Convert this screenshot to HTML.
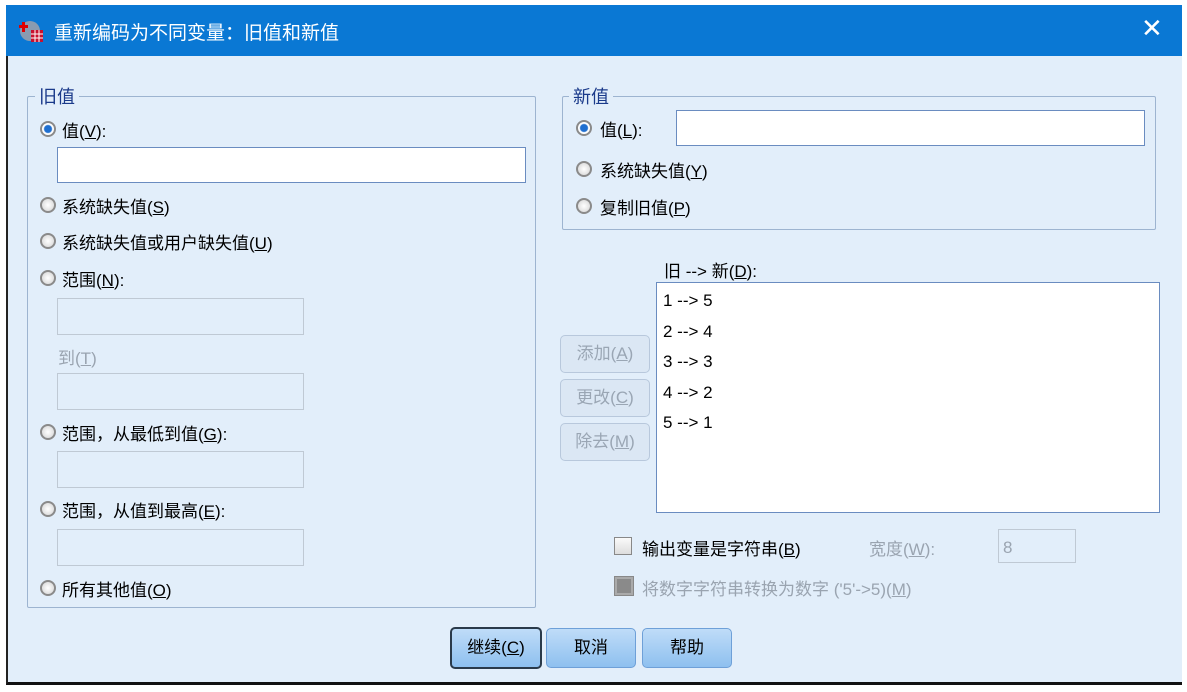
<!DOCTYPE html><html><head><meta charset="utf-8"><style>
body{margin:0;width:1187px;height:692px;background:#fff;font-family:"Liberation Sans","Noto Sans CJK SC",sans-serif;font-size:17px;color:#000;position:relative;overflow:hidden}
.a{position:absolute}
.win{left:6px;top:5px;width:1174px;height:677px;background:#e2eefa;border-left:2px solid #222;border-bottom:3px solid #111}
.title{left:6px;top:5px;width:1176px;height:51px;background:#0a78d4;color:#fff;font-size:19px}
.grp{border:1px solid #9db4d0;border-radius:2px}
.lg{background:#e2eefa;padding:0 4px;color:#1a3a8a;font-size:18px}
.rad{width:16px;height:16px;border-radius:50%;border:2px solid #8a8a8a;background:radial-gradient(circle,#fff 0,#e0e0e0 70%);box-sizing:border-box}
.rad.on{background:radial-gradient(circle,#1f6fd0 0 3.5px,#fff 4.5px)}
.inp{background:#fff;border:1px solid #6a8cc0}
.dis{background:#e2eefa;border:1px solid #bfc9d4}
.btn{border:1px solid #6ea0d8;border-radius:5px;background:linear-gradient(#bfdcf8,#8ec0ef);text-align:center;line-height:38px;font-size:17px}
.dbtn{border:1px solid #b8c8dc;border-radius:5px;background:#dbe7f4;color:#9aa6b4;text-align:center;line-height:36px}
u{text-decoration:underline}
.g{color:#9aa4b0}
</style></head><body>
<div class="a win"></div>
<div class="a title">
<svg class="a" style="left:13px;top:13px" width="26" height="26"><circle cx="11" cy="13" r="10" fill="#8a9bb0"/><rect x="3" y="4" width="3" height="10" fill="#d00"/><rect x="0" y="7" width="9" height="3" fill="#d00"/><rect x="12" y="12" width="12" height="12" fill="#c8102e"/><path d="M12 16h12M12 20h12M16 12v12M20 12v12" stroke="#fff" stroke-width="1"/></svg>
<div class="a" style="left:48px;top:13px">重新编码为不同变量：旧值和新值</div>
<div class="a" style="left:1135px;top:8px;font-size:26px;font-weight:300">✕</div>
</div>

<div class="a grp" style="left:27px;top:96px;width:507px;height:510px"></div>
<div class="a lg" style="left:35px;top:83px">旧值</div>
<div class="a rad on" style="left:40px;top:121px"></div><div class="a" style="left:62px;top:117px">值(<u>V</u>):</div>
<div class="a inp" style="left:57px;top:147px;width:467px;height:34px"></div>
<div class="a rad" style="left:40px;top:197px"></div><div class="a" style="left:62px;top:193px">系统缺失值(<u>S</u>)</div>
<div class="a rad" style="left:40px;top:233px"></div><div class="a" style="left:62px;top:229px">系统缺失值或用户缺失值(<u>U</u>)</div>
<div class="a rad" style="left:40px;top:270px"></div><div class="a" style="left:62px;top:266px">范围(<u>N</u>):</div>
<div class="a dis" style="left:57px;top:298px;width:245px;height:35px"></div>
<div class="a g" style="left:58px;top:344px">到(<u>T</u>)</div>
<div class="a dis" style="left:57px;top:373px;width:245px;height:35px"></div>
<div class="a rad" style="left:40px;top:424px"></div><div class="a" style="left:62px;top:420px">范围，从最低到值(<u>G</u>):</div>
<div class="a dis" style="left:57px;top:451px;width:245px;height:35px"></div>
<div class="a rad" style="left:40px;top:501px"></div><div class="a" style="left:62px;top:497px">范围，从值到最高(<u>E</u>):</div>
<div class="a dis" style="left:57px;top:529px;width:245px;height:35px"></div>
<div class="a rad" style="left:40px;top:580px"></div><div class="a" style="left:62px;top:576px">所有其他值(<u>O</u>)</div>

<div class="a grp" style="left:562px;top:96px;width:592px;height:132px"></div>
<div class="a lg" style="left:569px;top:83px">新值</div>
<div class="a rad on" style="left:576px;top:120px"></div><div class="a" style="left:600px;top:116px">值(<u>L</u>):</div>
<div class="a inp" style="left:676px;top:110px;width:467px;height:34px"></div>
<div class="a rad" style="left:576px;top:161px"></div><div class="a" style="left:600px;top:157px">系统缺失值(<u>Y</u>)</div>
<div class="a rad" style="left:576px;top:198px"></div><div class="a" style="left:600px;top:194px">复制旧值(<u>P</u>)</div>

<div class="a" style="left:664px;top:257px">旧 --&gt; 新(<u>D</u>):</div>
<div class="a inp" style="left:656px;top:282px;width:502px;height:229px"></div>
<div class="a" style="left:663px;top:286px;line-height:30.5px">1 --&gt; 5<br>2 --&gt; 4<br>3 --&gt; 3<br>4 --&gt; 2<br>5 --&gt; 1</div>
<div class="a dbtn" style="left:560px;top:335px;width:88px;height:36px">添加(<u>A</u>)</div>
<div class="a dbtn" style="left:560px;top:379px;width:88px;height:36px">更改(<u>C</u>)</div>
<div class="a dbtn" style="left:560px;top:423px;width:88px;height:36px">除去(<u>M</u>)</div>

<div class="a" style="left:614px;top:537px;width:18px;height:18px;border:1px solid #888;background:linear-gradient(#fafafa,#ddd);box-sizing:border-box"></div>
<div class="a" style="left:642px;top:535px">输出变量是字符串(<u>B</u>)</div>
<div class="a g" style="left:869px;top:535px">宽度(<u>W</u>):</div>
<div class="a dis g" style="left:998px;top:529px;width:78px;height:34px;line-height:36px;padding-left:4px;box-sizing:border-box">8</div>
<div class="a" style="left:614px;top:576px;width:20px;height:20px;border:1px solid #888;background:#8a8a8a;box-sizing:border-box;box-shadow:inset 0 0 0 2px #aaa"></div>
<div class="a g" style="left:642px;top:575px">将数字字符串转换为数字 ('5'-&gt;5)(<u>M</u>)</div>

<div class="a btn" style="left:450px;top:627px;width:88px;height:38px;border:2px solid #2a3a4a">继续(<u>C</u>)</div>
<div class="a btn" style="left:546px;top:628px;width:88px;height:38px">取消</div>
<div class="a btn" style="left:642px;top:628px;width:88px;height:38px">帮助</div>
</body></html>
